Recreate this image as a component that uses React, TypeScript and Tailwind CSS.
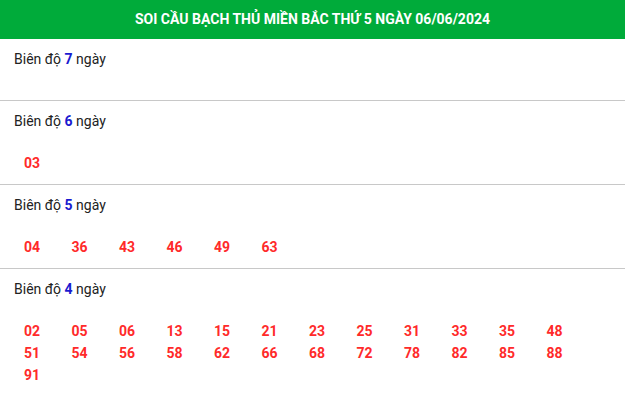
import React from 'react';

const sections: { days: number; numbers: string[] }[] = [
    { days: 7, numbers: [] },
    { days: 6, numbers: ['03'] },
    { days: 5, numbers: ['04', '36', '43', '46', '49', '63'] },
    {
        days: 4,
        numbers: [
            '02', '05', '06', '13', '15', '21', '23', '25', '31', '33', '35', '48',
            '51', '54', '56', '58', '62', '66', '68', '72', '78', '82', '85', '88',
            '91'
        ]
    }
];

export default function App() {
    return (
        <div className="w-[625px] bg-white font-['Roboto',sans-serif]">
            {/* Tiêu đề */}
            <div className="flex h-[39px] items-center justify-center bg-[#00ab3a]">
                <h2 className="text-[14px] font-bold text-white">
                    SOI CẦU BẠCH THỦ MIỀN BẮC THỨ 5 NGÀY 06/06/2024
                </h2>
            </div>

            {sections.map((s) => (
                <div key={s.days} className="border-b border-[#c8c8c8] px-[14px] pt-[10px] pb-[10px]">
                    <div className="h-[20px] text-[14px] leading-[20px] text-[#222]">
                        Biên độ <span className="font-bold text-[#1a1ad0]">{s.days}</span> ngày
                    </div>
                    <div className="mt-[21px] grid grid-cols-[repeat(12,47.5px)] pl-[10px]">
                        {s.numbers.map((n) => (
                            <span key={n} className="h-[22px] text-[14px] leading-[22px] font-bold text-[#ff2a2a]">
                                {n}
                            </span>
                        ))}
                    </div>
                </div>
            ))}
        </div>
    );
}
